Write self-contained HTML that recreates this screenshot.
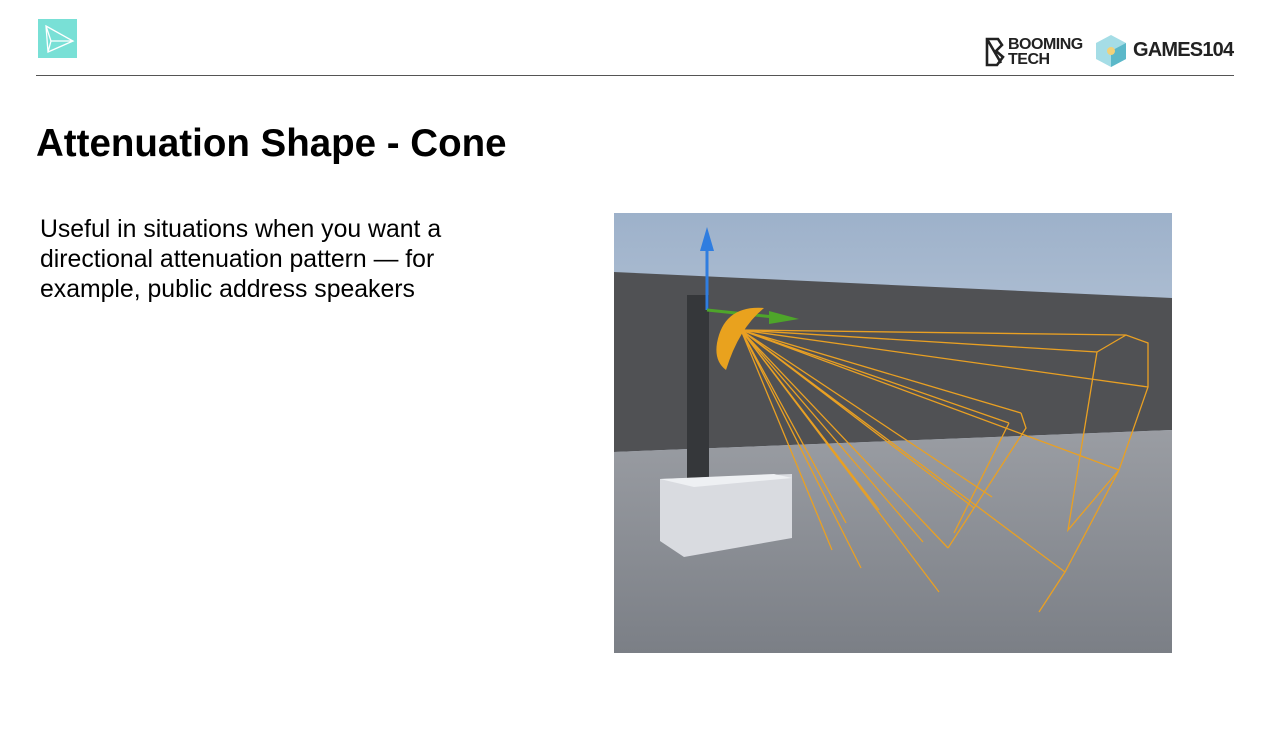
<!DOCTYPE html>
<html><head><meta charset="utf-8"><style>
body{margin:0;width:1280px;height:739px;background:#fff;position:relative;overflow:hidden;font-family:"Liberation Sans",sans-serif}
.a{position:absolute}
</style></head><body>
<div class="a" style="left:38px;top:19px;width:39px;height:39px;background:#79e0d6">
<svg width="39" height="39"><path d="M8 7 L35 22 L10 33 Z M8 7 L13 22 L10 33 M13 22 L35 22" fill="none" stroke="#fff" stroke-width="1.3"/></svg></div>
<div class="a" style="left:36px;top:75px;width:1198px;height:1px;background:#555"></div>
<svg class="a" style="left:984px;top:37px" width="22" height="30"><path d="M3 2h11l4 6-6 6 7 6-6 8H3z M3 2l14 24" fill="none" stroke="#222" stroke-width="2.6"/></svg>
<div class="a" style="left:1008px;top:37px;font-weight:bold;font-size:16px;line-height:15px;color:#222;letter-spacing:-0.5px">BOOMING<br>TECH</div>
<svg class="a" style="left:1094px;top:34px" width="34" height="34"><path d="M17 1 L32 9 L32 25 L17 33 L2 25 L2 9Z" fill="#a5dde6"/><path d="M17 17 L32 9 L32 25 L17 33Z" fill="#5bb8c9"/><circle cx="17" cy="17" r="4" fill="#f1d27a"/></svg>
<div class="a" style="left:1133px;top:39px;font-weight:bold;font-size:20px;color:#222;letter-spacing:-0.8px">GAMES104</div>
<div class="a" style="left:36px;top:122px;font-weight:bold;font-size:38.5px;color:#000">Attenuation Shape - Cone</div>
<div class="a" style="left:40px;top:215px;font-size:24.8px;line-height:30px;color:#000">Useful in situations when you want a<br>directional attenuation pattern — for<br>example, public address speakers</div>
<svg class="a" style="left:614px;top:213px" width="558" height="440" viewBox="0 0 558 440">
<defs><linearGradient id="s" x1="0" y1="0" x2="0" y2="1"><stop offset="0" stop-color="#9db1ca"/><stop offset="1" stop-color="#e3e7ec"/></linearGradient>
<linearGradient id="f" x1="0" y1="0" x2="0" y2="1"><stop offset="0" stop-color="#9a9da3"/><stop offset="1" stop-color="#7b7f86"/></linearGradient></defs>
<rect width="558" height="440" fill="url(#s)"/>
<path d="M0 59 L558 85 L558 217 L0 239Z" fill="#505154"/>
<path d="M0 239 L558 217 L558 440 L0 440Z" fill="url(#f)"/>
<rect x="73" y="82" width="22" height="190" fill="#35373a"/>
<path d="M46 266 L178 261 L178 325 L70 344 L46 328Z" fill="#d9dbe0"/>
<path d="M46 266 L160 261 L178 265 L80 274Z" fill="#eef0f3"/>
<path d="M93 26 L93 97" stroke="#2f7de0" stroke-width="3"/><path d="M86 38 L93 14 L100 38Z" fill="#2f7de0"/>
<path d="M93 97 L160 104" stroke="#4ea52a" stroke-width="3"/><path d="M155 98 L185 106 L155 111Z" fill="#4ea52a"/>
<path d="M103 130 Q110 92 150 95 Q125 115 112 157 Q100 148 103 130Z" fill="#e9a21e"/>
<g stroke="#e9a023" stroke-width="1.3" fill="none">
<path d="M127 117 L512 122 L534 130 L534 174 L505 257 L451 359 L425 399
M127 117 L483 139 L454 317 L505 257
M512 122 L483 139
M127 117 L534 174 M127 117 L505 257 M127 117 L451 359 M127 117 L325 379 M127 117 L247 355 M127 117 L218 337 M127 117 L232 310 M127 117 L334 335 M127 117 L407 200 M127 117 L309 329 M127 117 L265 297 M127 117 L378 284 M127 117 L483 139
M407 200 L412 215 L334 335 M127 117 L395 210 M127 117 L360 295 M395 210 L340 320"/>
</g>
</svg>
</body></html>
